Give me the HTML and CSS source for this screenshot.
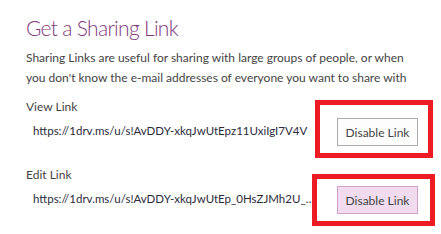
FILE: index.html
```html
<!DOCTYPE html>
<html lang="en">
  <head>
    <meta charset="UTF-8" />
    <meta name="viewport" content="width=device-width, initial-scale=1.0" />
    <title>Get a Sharing Link</title>
    <link rel="stylesheet" href="styles.css">
  </head>
  <body>
    <div class="share-panel">
      <h1 class="title">Get a Sharing Link</h1>
      <p class="intro">
        Sharing Links are useful for sharing with large groups of people, or when<br />
        you don't know the e-mail addresses of everyone you want to share with
      </p>

      <div class="link-block">
        <div class="link-label">View Link</div>
        <div class="link-row">
          <span class="link-url">https://1drv.ms/u/s!AvDDY-xkqJwUtEpz11UxiIgI7V4V</span>
          <span class="btn-wrap view">
            <button class="btn">Disable Link</button>
          </span>
        </div>
      </div>

      <div class="link-block">
        <div class="link-label">Edit Link</div>
        <div class="link-row">
          <span class="link-url">https://1drv.ms/u/s!AvDDY-xkqJwUtEp_0HsZJMh2U_4UbSPyq</span>
          <span class="btn-wrap edit">
            <button class="btn btn-hover">Disable Link</button>
          </span>
        </div>
      </div>
    </div>
  </body>
</html>
```
FILE: styles.css
```css
/* reset */
body,
h1,
p {
  margin: 0;
  padding: 0;
}

body {
  background-color: #fff;
  font-family: Lato, "Open Sans", sans-serif;
  color: #444;
}

.share-panel {
  width: 441px;
  height: 234px;
  padding: 14px 0 0 26px;
  box-sizing: border-box;
  overflow: hidden;
}

.title {
  font-size: 21px;
  font-weight: 300;
  line-height: 28px;
  letter-spacing: -0.7px;
  color: #80397b;
}

.intro {
  margin-top: 6px;
  font-size: 12px;
  line-height: 20px;
  color: #444;
  white-space: nowrap;
}

.link-block {
  margin-top: 10px;
}

.link-block + .link-block {
  margin-top: 18px;
}

.link-label {
  font-size: 12px;
  line-height: 18px;
  color: #444;
}

.link-row {
  display: flex;
  align-items: center;
  height: 32px;
}

.link-url {
  width: 285px;
  padding-left: 7px;
  padding-bottom: 3px;
  font-size: 11.5px;
  color: #2b2b3a;
  white-space: nowrap;
  overflow: hidden;
  text-overflow: ellipsis;
}

.btn-wrap {
  position: relative;
  height: 28px;
  margin-left: 19px;
}

.btn {
  display: block;
  width: 81px;
  height: 28px;
  padding: 0;
  font-family: inherit;
  font-size: 12px;
  color: #444;
  background-color: #fdfdfd;
  border: 1px solid #ababab;
}

.btn-hover {
  background-color: #f1dcef;
  border-color: #cfa3cc;
}

/* red annotation boxes */
.btn-wrap::before {
  content: "";
  position: absolute;
  border: 5px solid #ed1c24;
}

.view::before {
  left: -22px;
  right: -15px;
  top: -18px;
  bottom: -12px;
}

.edit::before {
  left: -25px;
  right: -17px;
  top: -12px;
  bottom: -12px;
}
```
